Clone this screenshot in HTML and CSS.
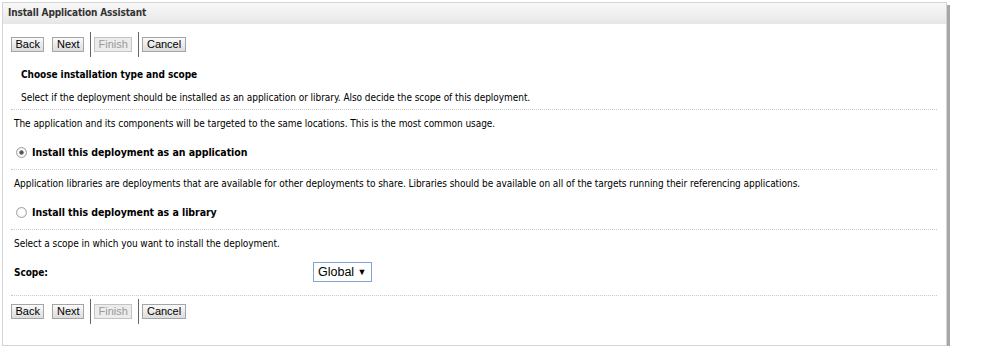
FILE: index.html
```html
<!DOCTYPE html>
<html lang="en">
<head>
    <meta charset="UTF-8">
    <title>Install Application Assistant</title>
    <link rel="stylesheet" href="styles.css">
</head>
<body>
    <div class="panel">
        <div class="panel-title">Install Application Assistant</div>
        <div class="panel-body">
            <div class="toolbar">
                <button class="btn">Back</button>
                <button class="btn">Next</button>
                <span class="sep"></span>
                <button class="btn" disabled>Finish</button>
                <span class="sep"></span>
                <button class="btn">Cancel</button>
            </div>

            <div class="intro">
                <h2 class="intro-title">Choose installation type and scope</h2>
                <p class="intro-text">Select if the deployment should be installed as an application or library. Also decide the scope of this deployment.</p>
            </div>

            <div class="section">
                <p class="note">The application and its components will be targeted to the same locations. This is the most common usage.</p>
                <label class="choice">
                    <input type="radio" name="kind" checked>
                    <span>Install this deployment as an application</span>
                </label>
            </div>

            <div class="section">
                <p class="note">Application libraries are deployments that are available for other deployments to share. Libraries should be available on all of the targets running their referencing applications.</p>
                <label class="choice">
                    <input type="radio" name="kind">
                    <span>Install this deployment as a library</span>
                </label>
            </div>

            <div class="section">
                <p class="note">Select a scope in which you want to install the deployment.</p>
                <div class="field">
                    <span class="field-label">Scope:</span>
                    <span class="select">Global <span class="caret">&#9660;</span></span>
                </div>
            </div>

            <div class="toolbar toolbar-bottom">
                <button class="btn">Back</button>
                <button class="btn">Next</button>
                <span class="sep"></span>
                <button class="btn" disabled>Finish</button>
                <span class="sep"></span>
                <button class="btn">Cancel</button>
            </div>
        </div>
    </div>
</body>
</html>
```

FILE: styles.css
```css
body {
    margin: 0;
    background: #fff;
    font-family: "DejaVu Sans Condensed", "DejaVu Sans", sans-serif;
    font-size: 10px;
    letter-spacing: -0.05px;
    color: #000;
}
.panel {
    margin: 2px 0 0 2px;
    width: 943px;
    height: 342px;
    border: 1px solid #d4d4d4;
    box-shadow: 3px 3px 0 #a7a7a7;
    background: #fff;
}
.panel-title {
    height: 20px;
    line-height: 20px;
    padding-left: 5px;
    font-weight: bold;
    font-size: 10px;
    letter-spacing: -0.15px;
    color: #333;
    background: linear-gradient(#f8f8f8, #e8e8e8);
    border-bottom: 1px solid #e6e6e6;
}
.panel-body {
    padding: 0 9px 0 8px;
}
.toolbar {
    display: flex;
    align-items: center;
    height: 25px;
    margin-top: 8px;
}
.btn {
    font-family: "Liberation Sans", Arial, sans-serif;
    font-size: 11px;
    letter-spacing: 0;
    color: #000;
    height: 15px;
    padding: 0 3.5px;
    margin-right: 8px;
    border: 1px solid #a5a5a5;
    background: linear-gradient(#fafafa, #dcdcdc);
    line-height: 13px;
}
.btn:disabled {
    color: #9a9a9a;
    background: #ececec;
    border-color: #c4c4c4;
}
.sep {
    width: 1px;
    height: 25px;
    background: #666;
    margin: 0 3px 0 -2px;
}
.intro {
    padding: 11px 0 0 10px;
    border-bottom: 1px dotted #c8c8c8;
}
.intro-title {
    margin: 0;
    font-size: 10px;
    font-weight: bold;
    line-height: 14px;
}
.intro-text {
    margin: 9px 0 0;
    line-height: 14px;
    padding-bottom: 4px;
}
.section {
    padding: 0 0 0 3px;
    border-bottom: 1px dotted #c8c8c8;
}
.note {
    margin: 0;
    padding-top: 7px;
    line-height: 14px;
}
.choice {
    display: flex;
    align-items: center;
    gap: 5px;
    font-weight: bold;
    font-size: 10.5px;
    padding: 15px 0 11px 2px;
}
.choice input {
    appearance: none;
    margin: 0;
    width: 11px;
    height: 11px;
    border: 1px solid #a0a0a0;
    border-radius: 50%;
    background: radial-gradient(circle, #fff 40%, #e4e4e4);
}
.choice input:checked {
    background: radial-gradient(circle, #4e4e4e 0, #5e5e5e 1.8px, #fff 2.6px, #f4f4f4 60%, #dcdcdc);
}
.field {
    display: flex;
    align-items: center;
    padding: 11px 0 13px;
}
.field-label {
    font-weight: bold;
    width: 299px;
}
.select {
    font-family: "Liberation Sans", Arial, sans-serif;
    font-size: 12.5px;
    letter-spacing: 0;
    border: 1px solid #7aa5d6;
    padding: 2px 4px;
    line-height: 14px;
}
.caret {
    font-size: 9px;
    vertical-align: 1px;
}
.toolbar-bottom {
    margin-top: 3px;
}
```
